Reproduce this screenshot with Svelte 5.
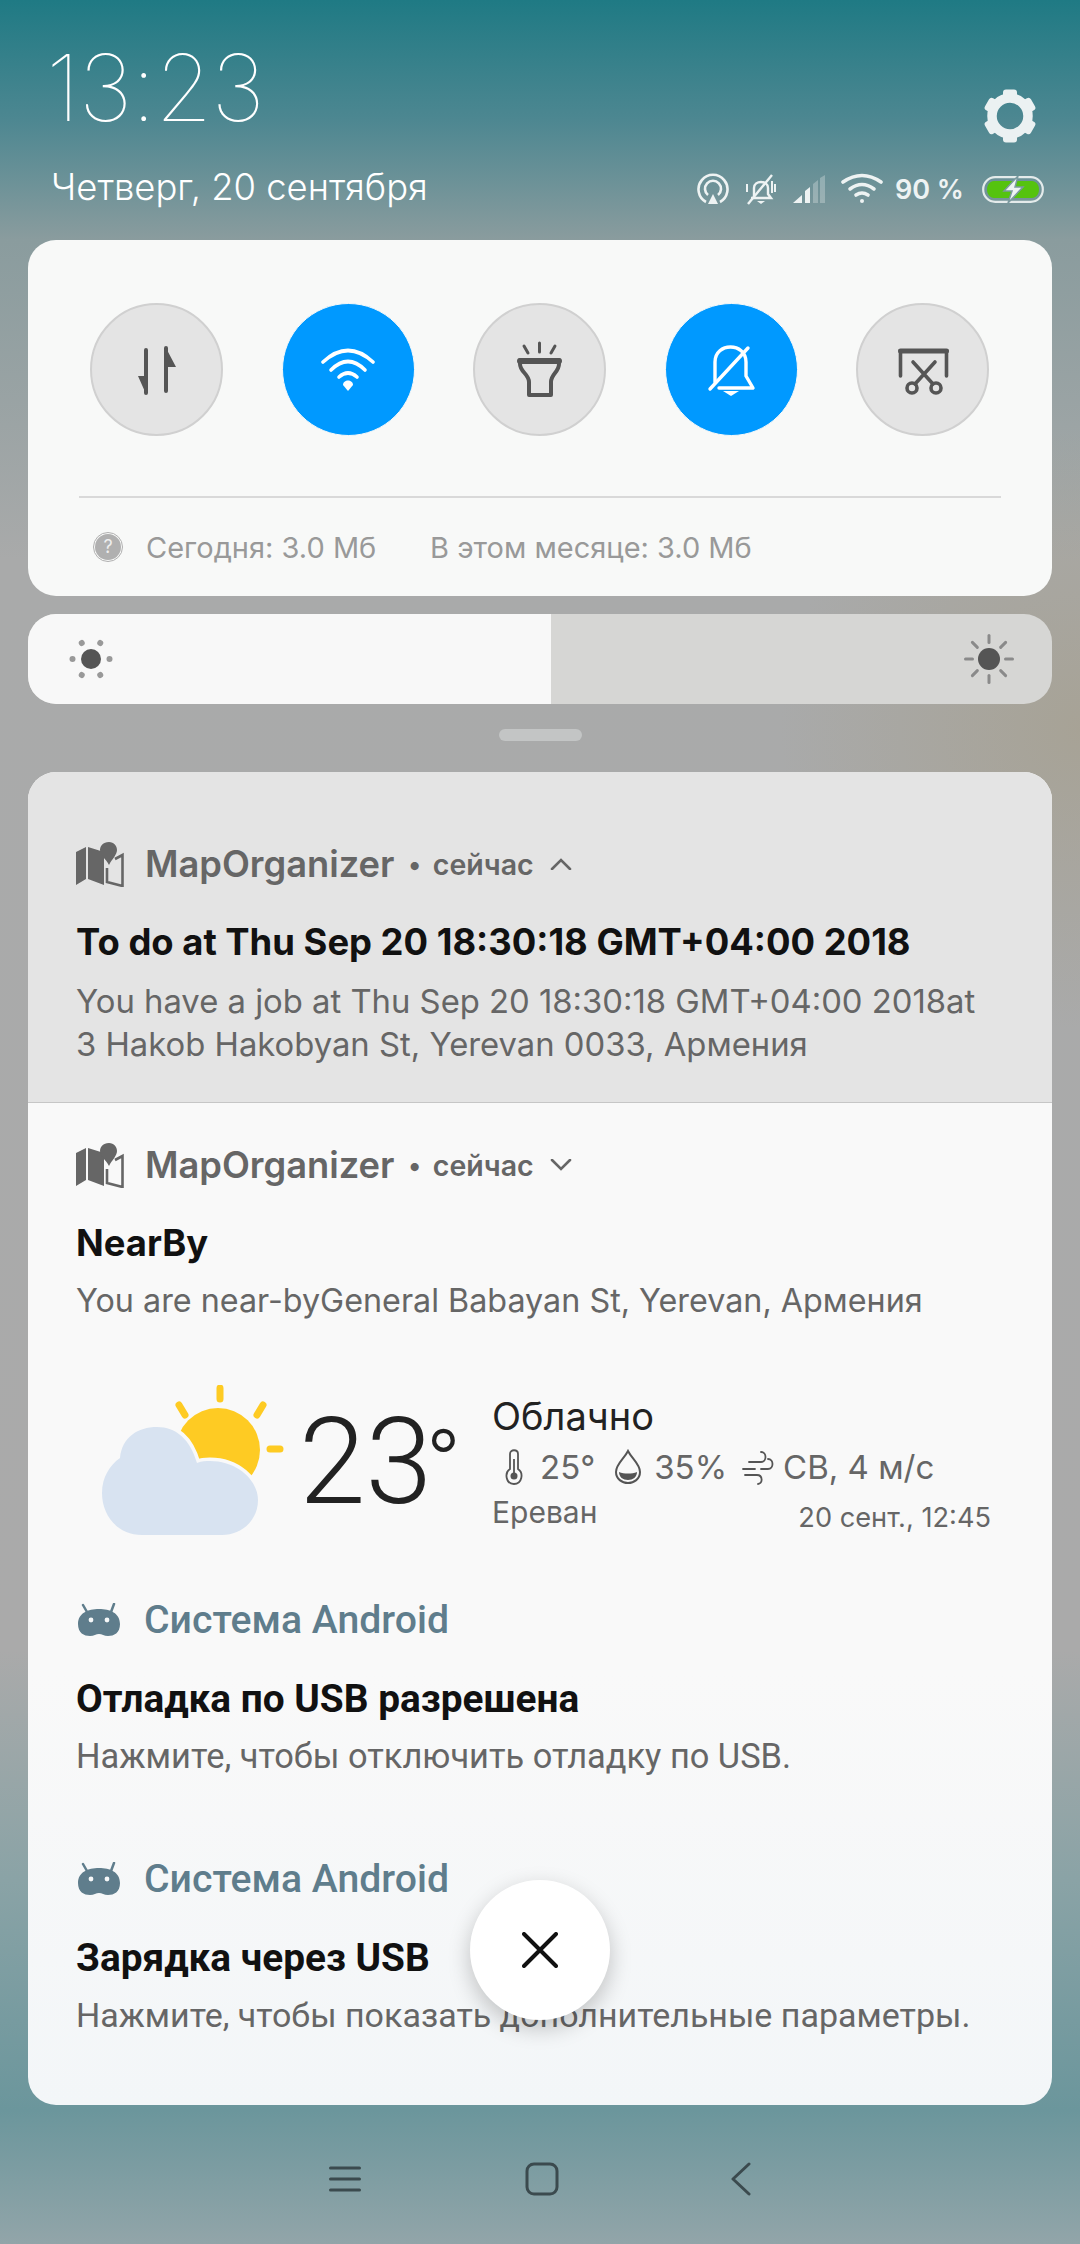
<script>
  const gearTeeth = [0, 60, 120, 180, 240, 300];
  const smallDots = [0, 60, 120, 180, 240, 300];
  const bigRays = [0, 45, 90, 135, 180, 225, 270, 315];
</script>

{#snippet mapIcon()}
  <svg class="app-icon" viewBox="0 0 48 46" width="48" height="46">
    <path fill="#666" d="M0 11 L10 6 V38 L0 44 Z M12 6 L28 11 V44 L12 38 Z" />
    <path fill="none" stroke="#666" stroke-width="2.6" d="M39 18 L46.5 14 V45 L31 41 V27" />
    <path fill="#666" d="M33 1 C27 1 24 5 24 9 C24 14 30 18 33 24 C36 18 41 14 41 9 C41 5 38 1 33 1 Z" />
  </svg>
{/snippet}

{#snippet droidIcon()}
  <svg class="droid-icon" viewBox="0 0 42 34" width="42" height="34">
    <path fill="#5f7d8c" d="M21 6 C32 6 42 10 42 21 C42 30 36 33 30 33 C26 33 24 31 21 31 C18 31 16 33 12 33 C6 33 0 30 0 21 C0 10 10 6 21 6 Z" />
    <path stroke="#5f7d8c" stroke-width="2.5" stroke-linecap="round" d="M9 9 L5 2 M33 9 L36 1" />
    <circle cx="13" cy="17" r="2.4" fill="#f6f8f9" />
    <circle cx="29" cy="17" r="2.4" fill="#f6f8f9" />
  </svg>
{/snippet}

<div class="screen">
  <header class="top">
    <div class="clock">
      <div class="time">13:23</div>
      <div class="date">Четверг, 20 сентября</div>
    </div>
    <div class="top-right">
      <svg class="gear" viewBox="0 0 54 54" width="54" height="54">
        {#each gearTeeth as a}
          <rect x="20" y="0.5" width="14" height="12" rx="3" fill="#ebf1f2" transform="rotate({a} 27 27)" />
        {/each}
        <circle cx="27" cy="27" r="18" fill="none" stroke="#ebf1f2" stroke-width="9.5" />
      </svg>
      <div class="status">
        <svg viewBox="0 0 32 32" width="32" height="32" fill="none" stroke="#eef3f3" stroke-width="2.6">
          <path d="M9 29 A14.5 14.5 0 1 1 23 29" />
          <path d="M11 22 A8 8 0 1 1 21 22" />
          <path d="M16 21 L21 31 H11 Z" fill="#eef3f3" stroke="none" />
        </svg>
        <svg viewBox="0 0 32 32" width="32" height="32" fill="none" stroke="#eef3f3" stroke-width="2.4">
          <path d="M9 25 V15 C9 7 23 7 23 15 V21 L26 25 H6" />
          <path d="M3 31 L27 2" />
          <path d="M2 11 V19 M30 11 V19 M27 8 V20" stroke-width="2" />
          <path d="M12 28 H20 L16 31 Z" fill="#eef3f3" stroke="none" />
        </svg>
        <svg viewBox="0 0 32 28" width="32" height="28">
          <path fill="#eef3f3" d="M0 28 L9 20 V28 Z M12 16 L17 12 V28 H12 Z" />
          <path fill="#eef3f3" opacity=".3" d="M20 9 L25 5 V28 H20 Z M27 3 L32 0 V28 H27 Z" />
        </svg>
        <svg viewBox="0 0 42 32" width="42" height="32" fill="none" stroke="#eef3f3" stroke-width="3.6" stroke-linecap="round">
          <path d="M2 9 Q21 -4 40 9" />
          <path d="M9 16 Q21 7 33 16" />
          <path d="M15 22 Q21 18 27 22" />
          <circle cx="21" cy="28" r="2" fill="#eef3f3" stroke="none" />
        </svg>
        <span class="pct">90 %</span>
        <svg class="batt" viewBox="0 0 62 27" width="62" height="27">
          <rect x="1.2" y="1.2" width="59.6" height="24.6" rx="12" fill="none" stroke="#e4ebeb" stroke-width="2.2" />
          <path fill="#55c30f" d="M12 5 H50 C54 5 57 9 57 13.5 C57 18 54 22 50 22 H12 C8 22 5 18 5 13.5 C5 9 8 5 12 5 Z" />
          <path fill="#eef3f3" stroke="#7b9a9f" stroke-width="1.5" d="M36 0 L22 15 H30 L26 27 L41 11 H33 Z" />
        </svg>
      </div>
    </div>
  </header>

  <section class="toggles">
    <div class="toggle-row">
      <div class="toggle">
        <svg viewBox="0 0 64 64" width="64" height="64">
          <path stroke="#555" stroke-width="4" stroke-linecap="round" d="M21 12 V55 M41 10 V53" />
          <path fill="#555" d="M21 56 L13 38 H21 Z M41 10 L51 29 H41 Z" />
        </svg>
      </div>
      <div class="toggle on">
        <svg viewBox="0 0 64 64" width="64" height="64" fill="none" stroke="#fff" stroke-width="3.6" stroke-linecap="round">
          <path d="M7 24 Q32 1 57 24" />
          <path d="M15 32 Q32 15 49 32" />
          <path d="M23 39 Q32 31 41 39" />
          <path d="M32 53 L27 47 C27 41 37 41 37 47 Z" fill="#fff" stroke="none" />
        </svg>
      </div>
      <div class="toggle">
        <svg viewBox="0 0 64 64" width="64" height="64" fill="none" stroke="#555" stroke-width="4" stroke-linecap="round" stroke-linejoin="round">
          <path d="M31.5 5 V14 M16 8 L20 15 M47 8 L43 15" stroke-width="3" />
          <path d="M12 22 H51 V26 C51 34 43 36 43 44 V57 H21 V44 C21 36 12 34 12 26 Z" />
          <path d="M12 23 H51" stroke-width="6" />
        </svg>
      </div>
      <div class="toggle on">
        <svg viewBox="0 0 64 64" width="64" height="64" fill="none" stroke="#fff" stroke-width="3.4" stroke-linecap="round" stroke-linejoin="round">
          <path d="M16 44 V24 C16 4 47 4 47 24 V38 L54 50 H20" />
          <path d="M49 10 L11 51" />
          <path d="M24 53 H40 L32 58 Z" fill="#fff" stroke="none" />
        </svg>
      </div>
      <div class="toggle">
        <svg viewBox="0 0 64 64" width="64" height="64" fill="none" stroke="#555" stroke-width="3.6" stroke-linecap="round">
          <path d="M9.5 38 V13 H55.5 V38" />
          <path d="M9.5 13 H55.5" stroke-width="5" />
          <path d="M22 24 L42 46 M44 24 L24 46" />
          <circle cx="21" cy="50" r="5" />
          <circle cx="45" cy="50" r="5" />
        </svg>
      </div>
    </div>
    <div class="usage">
      <span class="help">?</span>
      <span class="used-today">Сегодня: 3.0 Мб</span>
      <span>В этом месяце: 3.0 Мб</span>
    </div>
  </section>

  <section class="brightness">
    <div class="fill"></div>
    <svg class="sun-low" viewBox="0 0 44 44" width="44" height="44">
      {#each smallDots as a}
        <circle cx="22" cy="3.5" r="3" fill="#999" transform="rotate({a + 30} 22 22)" />
      {/each}
      <circle cx="22" cy="22" r="10" fill="#555" />
    </svg>
    <svg class="sun-high" viewBox="0 0 52 52" width="52" height="52">
      {#each bigRays as a}
        <rect x="24.5" y="1" width="3" height="10" rx="1.5" fill="#8a8a8a" transform="rotate({a} 26 26)" />
      {/each}
      <circle cx="26" cy="26" r="11" fill="#555" />
    </svg>
  </section>

  <div class="handle"></div>

  <section class="notifications">
    <article class="note expanded">
      <div class="note-head">
        {@render mapIcon()}
        <span class="app">MapOrganizer</span>
        <span class="dot">•</span>
        <span class="when">сейчас</span>
        <svg class="chev" viewBox="0 0 22 12" width="22" height="12" fill="none" stroke="#666" stroke-width="2.6" stroke-linecap="round"><path d="M2 11 L11 2 L20 11" /></svg>
      </div>
      <h3>To do at Thu Sep 20 18:30:18 GMT+04:00 2018</h3>
      <p>You have a job at Thu Sep 20 18:30:18 GMT+04:00 2018at<br />3 Hakob Hakobyan St, Yerevan 0033, Армения</p>
    </article>

    <article class="note nearby">
      <div class="note-head">
        {@render mapIcon()}
        <span class="app">MapOrganizer</span>
        <span class="dot">•</span>
        <span class="when">сейчас</span>
        <svg class="chev" viewBox="0 0 22 12" width="22" height="12" fill="none" stroke="#666" stroke-width="2.6" stroke-linecap="round"><path d="M2 1 L11 10 L20 1" /></svg>
      </div>
      <h3>NearBy</h3>
      <p>You are near-byGeneral Babayan St, Yerevan, Армения</p>
    </article>

    <div class="weather">
      <svg class="weather-art" viewBox="0 0 184 152" width="184" height="152">
        <circle cx="116" cy="65" r="42" fill="#fecb23" />
        <path stroke="#fecb23" stroke-width="7" stroke-linecap="round" d="M118 3 V14 M77 20 L83 30 M161 20 L155 30 M168 64 H178" />
        <path fill="#d8e3f1" stroke="#f9f9f9" stroke-width="7" paint-order="stroke" d="M40 150 C15 150 0 130 0 108 C0 92 8 80 18 73 C20 52 36 42 55 42 C74 42 88 54 95 78 C100 76 104 76 108 76 C135 76 156 95 156 115 C156 135 140 150 120 150 Z" />
      </svg>
      <div class="temp">23<span class="deg">°</span></div>
      <div class="weather-info">
        <div class="sky">Облачно</div>
        <div class="readings">
          <svg viewBox="0 0 20 36" width="20" height="36" fill="none" stroke="#555" stroke-width="1.8">
            <path d="M6 20 V5 C6 0 14 0 14 5 V20 C20 24 18 35 10 35 C2 35 0 24 6 20 Z" />
            <circle cx="10" cy="27" r="3.5" fill="#555" stroke="none" />
            <path d="M10 24 V10" />
          </svg>
          <span class="r-temp">25°</span>
          <svg viewBox="0 0 28 36" width="28" height="36">
            <path fill="none" stroke="#555" stroke-width="2" d="M14 2 C10 10 2 15 2 23 C2 30 8 34 14 34 C20 34 26 30 26 23 C26 15 18 10 14 2 Z" />
            <path fill="#555" d="M5 23 C10 25 18 25 23 23 C23 28 19 31 14 31 C9 31 5 28 5 23 Z" />
          </svg>
          <span class="r-hum">35%</span>
          <svg viewBox="0 0 34 36" width="34" height="36" fill="none" stroke="#555" stroke-width="1.8" stroke-linecap="round">
            <path d="M8 13 H20 C26 13 26 3 20 3 M2 20 H14 M4 26 H16 C22 26 22 35 17 35 M20 20 H27 C33 20 33 10 27 10" />
          </svg>
          <span>СВ, 4 м/с</span>
        </div>
        <div class="place-row">
          <span class="place">Ереван</span>
          <span class="stamp">20 сент., 12:45</span>
        </div>
      </div>
    </div>

    <article class="note system">
      <div class="note-head">
        {@render droidIcon()}
        <span class="app android">Система Android</span>
      </div>
      <h3>Отладка по USB разрешена</h3>
      <p class="wider">Нажмите, чтобы отключить отладку по USB.</p>
    </article>

    <article class="note system last">
      <div class="note-head">
        {@render droidIcon()}
        <span class="app android">Система Android</span>
      </div>
      <h3>Зарядка через USB</h3>
      <p>Нажмите, чтобы показать дополнительные параметры.</p>
    </article>

    <button class="close" aria-label="Закрыть">
      <svg viewBox="0 0 36 36" width="36" height="36" stroke="#111" stroke-width="4" stroke-linecap="round"><path d="M2 2 L34 34 M34 2 L2 34" /></svg>
    </button>
  </section>

  <nav class="nav">
    <svg viewBox="0 0 32 26" width="32" height="26" stroke="#3b4a4e" stroke-width="3" stroke-linecap="round"><path d="M1.5 2 H30.5 M1.5 13 H30.5 M1.5 24 H30.5" /></svg>
    <svg viewBox="0 0 34 34" width="34" height="34" fill="none" stroke="#3b4a4e" stroke-width="3"><rect x="2" y="2" width="30" height="30" rx="7" /></svg>
    <svg viewBox="0 0 20 34" width="20" height="34" fill="none" stroke="#3b4a4e" stroke-width="3" stroke-linecap="round" stroke-linejoin="round"><path d="M18 2 L2 17 L18 32" /></svg>
  </nav>
</div>

<style>
  :global(body) {
    margin: 0;
  }

  .screen {
    position: relative;
    width: 1080px;
    height: 2244px;
    overflow: hidden;
    font-family: Inter, "Noto Sans", sans-serif;
    background:
      radial-gradient(circle at 1080px 730px, rgba(165, 155, 130, .5), rgba(165, 155, 130, 0) 300px),
      linear-gradient(180deg, #1f7a84 0, #4d8791 120px, #8a9c9e 240px, #a9aaaa 560px, #aaaaaa 1650px, #8aa3a6 1880px, #6b969c 2110px, #92a5a9 2244px);
  }

  /* status header */
  .top {
    display: flex;
    justify-content: space-between;
    align-items: flex-end;
    height: 240px;
    box-sizing: border-box;
    padding: 0 36px 33px 46px;
    color: #fff;
  }

  .time {
    font-size: 92px;
    font-weight: 100;
    line-height: 92px;
    margin-bottom: 33px;
    letter-spacing: -1px;
  }

  .date {
    font-size: 36.4px;
    font-weight: 300;
    line-height: 40px;
    margin-left: 5px;
  }

  .top-right {
    display: flex;
    flex-direction: column;
    align-items: flex-end;
    gap: 30px;
    margin-bottom: 2px;
  }

  .gear {
    margin-right: 7px;
  }

  .status {
    display: flex;
    align-items: center;
    gap: 16px;
    height: 32px;
  }

  .pct {
    font-size: 27px;
    font-weight: 600;
    color: #eef3f3;
    margin: 0 2px 0 -4px;
  }

  /* quick toggles */
  .toggles {
    margin: 0 28px;
    height: 356px;
    box-sizing: border-box;
    padding: 63px 51px 0;
    background: #f8f9f8;
    border-radius: 28px;
  }

  .toggle-row {
    display: flex;
    justify-content: space-between;
    padding: 0 12px 0 11px;
    height: 193px;
    border-bottom: 2px solid #d9d9d9;
  }

  .toggle {
    width: 133px;
    height: 133px;
    box-sizing: border-box;
    border-radius: 50%;
    background: #e4e4e4;
    border: 2px solid #d0d0d0;
    display: flex;
    align-items: center;
    justify-content: center;
  }

  .toggle.on {
    background: #0099ff;
    border: 1.5px solid #f8f9f8;
  }

  .usage {
    display: flex;
    align-items: center;
    height: 98px;
    padding-left: 16px;
    font-size: 29px;
    color: #999;
  }

  .help {
    width: 26px;
    height: 26px;
    border-radius: 50%;
    background: #b0b0b0;
    outline: 1px solid #b0b0b0;
    outline-offset: 1px;
    color: #eee;
    font-size: 18px;
    line-height: 26px;
    text-align: center;
    margin-right: 25px;
  }

  .used-today {
    width: 284px;
  }

  /* brightness */
  .brightness {
    position: relative;
    margin: 18px 28px 0;
    height: 90px;
    border-radius: 28px;
    overflow: hidden;
    background: #d6d6d4;
    display: flex;
    align-items: center;
    justify-content: space-between;
    padding: 0 37px 0 41px;
  }

  .fill {
    position: absolute;
    left: 0;
    top: 0;
    bottom: 0;
    width: 523px;
    background: #f8f8f8;
  }

  .sun-low,
  .sun-high {
    position: relative;
  }

  .handle {
    width: 83px;
    height: 12px;
    border-radius: 6px;
    background: #c3c5c5;
    margin: 25px auto 31px;
  }

  /* notification stack */
  .notifications {
    position: relative;
    margin: 0 28px;
    height: 1333px;
    border-radius: 28px;
    overflow: hidden;
    background: linear-gradient(180deg, #f9f9f9 0, #f9f9f9 900px, #f3f6f8 1333px);
  }

  .note {
    padding: 0 48px;
  }

  .note.expanded {
    height: 331px;
    box-sizing: border-box;
    padding-top: 69px;
    background: #e4e4e4;
    border-bottom: 1px solid #c6c6c6;
  }

  .note.expanded p {
    margin-top: 13px;
    font-size: 32.8px;
  }

  .note.nearby {
    padding-top: 39px;
  }

  .note-head {
    display: flex;
    align-items: center;
    height: 46px;
    color: #666;
  }

  .app {
    font-size: 36.3px;
    font-weight: 600;
    margin-left: 21px;
  }

  .app.android {
    color: #5f7d8c;
    margin-left: 24px;
    font-family: Roboto, sans-serif;
    font-weight: 500;
    font-size: 39.2px;
  }

  .droid-icon {
    margin-left: 2px;
  }

  .dot {
    font-size: 26px;
    font-weight: 700;
    margin: 0 12px 0 14px;
  }

  .when {
    font-size: 28.5px;
    font-weight: 600;
  }

  .chev {
    margin-left: 16px;
  }

  h3 {
    margin: 30px 0 0;
    font-size: 36.4px;
    font-weight: 700;
    line-height: 50px;
    color: #111;
    white-space: nowrap;
  }

  p {
    margin: 11px 0 0;
    font-size: 32.6px;
    line-height: 43px;
    color: #666;
    white-space: nowrap;
  }

  .nearby p {
    font-size: 32.3px;
  }

  .weather {
    display: flex;
    align-items: flex-start;
    padding: 63px 0 0 74px;
    height: 165px;
  }

  .weather-art {
    flex: none;
  }

  .temp {
    margin: 17px 0 0 13px;
    width: 193px;
    font-family: Roboto, sans-serif;
    font-size: 120px;
    font-weight: 300;
    line-height: 120px;
    color: #222;
    white-space: nowrap;
  }

  .deg {
    font-size: 96px;
    margin-left: -7px;
    vertical-align: 5px;
  }

  .weather-info {
    flex: 1;
    padding-right: 61px;
    color: #666;
    margin-top: 8px;
  }

  .sky {
    font-size: 38px;
    line-height: 46px;
    color: #222;
  }

  .readings {
    display: flex;
    align-items: center;
    margin: 8px 0 0 12px;
    height: 40px;
    font-size: 33px;
    white-space: nowrap;
  }

  .r-temp {
    margin: 0 19px 0 16px;
  }

  .r-hum {
    margin: 0 14px 0 12px;
  }

  .readings span:last-child {
    margin-left: 8px;
  }

  .place-row {
    display: flex;
    justify-content: space-between;
    align-items: flex-end;
    margin-top: 5px;
  }

  .place {
    font-size: 30px;
    line-height: 40px;
  }

  .stamp {
    font-size: 27.2px;
    line-height: 38px;
    margin-bottom: -5px;
  }

  .note.system {
    padding-top: 47px;
    font-family: Roboto, sans-serif;
  }

  .note.system.last {
    padding-top: 78px;
  }

  .note.system h3 {
    font-family: Roboto, sans-serif;
    font-size: 38.8px;
    font-weight: 700;
    margin-top: 31px;
  }

  .note.system p {
    font-family: Roboto, sans-serif;
    font-size: 34px;
  }

  .note.system p.wider {
    font-size: 34.4px;
  }

  .close {
    position: absolute;
    left: 442px;
    top: 1108px;
    width: 140px;
    height: 140px;
    border: none;
    padding: 0;
    border-radius: 50%;
    background: #fff;
    box-shadow: 0 8px 22px rgba(0, 0, 0, .22);
    display: flex;
    align-items: center;
    justify-content: center;
  }

  /* soft keys */
  .nav {
    position: relative;
    height: 139px;
    display: flex;
    align-items: center;
    gap: 164px;
    padding: 8px 0 0 329px;
    box-sizing: border-box;
  }

  .nav svg:last-child {
    margin-left: 8px;
  }
</style>
